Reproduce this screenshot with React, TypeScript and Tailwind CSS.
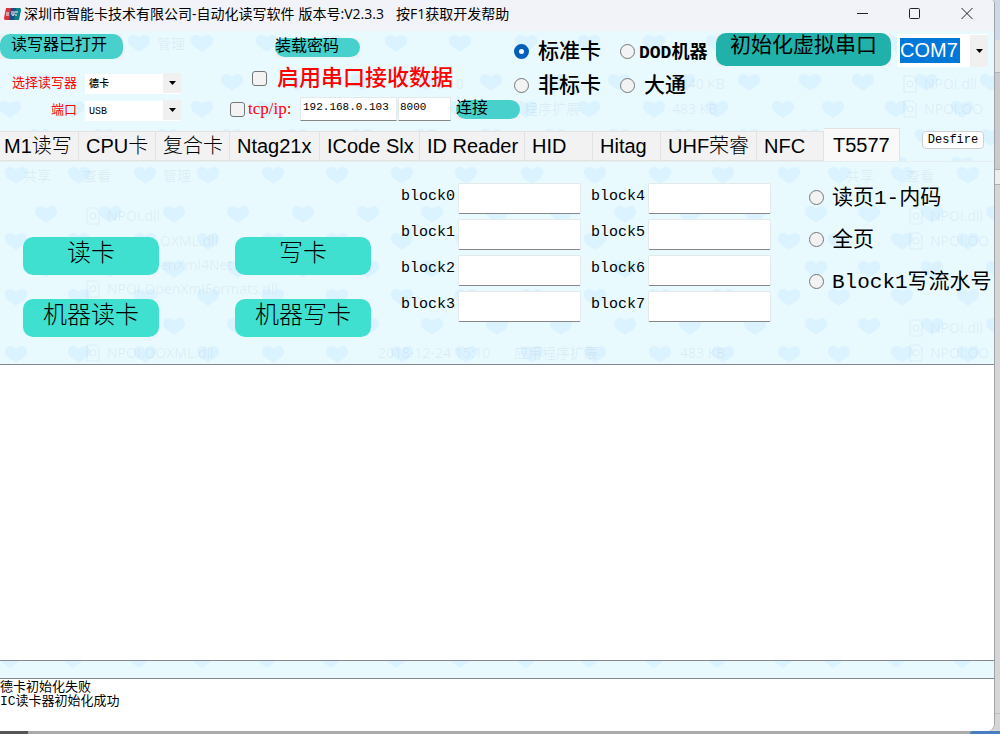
import React, { ReactNode, useState } from 'react';
import clsx from 'clsx';

const tabs = [
  { name: 'M1读写', className: 'w-[79px] pl-1' },
  { name: 'CPU卡', className: 'w-[77px] pl-[7px]' },
  { name: '复合卡', className: 'w-[74px] pl-[7px]' },
  { name: 'Ntag21x', className: 'w-[90px] pl-[7px]' },
  { name: 'ICode Slx', className: 'w-[100px] pl-[7px]' },
  { name: 'ID Reader', className: 'w-[105px] pl-[7px]' },
  { name: 'HID', className: 'w-[68px] pl-[7px]' },
  { name: 'Hitag', className: 'w-[68px] pl-[7px]' },
  { name: 'UHF荣睿', className: 'w-[96px] pl-[7px]' },
  { name: 'NFC', className: 'w-[67px] pl-[7px]' },
  { name: 'T5577', className: 'w-[76px] pl-[9px]' },
];

const evenHearts = [16, 79, 145, 208, 273, 337, 402, 466, 532, 595, 660, 723, 789, 839, 902, 968];
const oddHearts = [46, 110, 174, 238, 303, 368, 432, 497, 561, 625, 690, 755, 816, 869, 932, 997];
const heartRows = [13, 52, 79, 107, 135, 164, 192];

// Faded file list that shows through the wallpaper
const panelGhosts = [
  { x: 23, y: 19, text: '共享' },
  { x: 83, y: 19, text: '查看' },
  { x: 163, y: 19, text: '管理' },
  { x: 846, y: 19, text: '共享' },
  { x: 906, y: 19, text: '查看' },
  { x: 107, y: 59, text: 'NPOI.dll' },
  { x: 160, y: 84, text: 'OXML.dll' },
  { x: 160, y: 108, text: 'enXml4Net' },
  { x: 107, y: 132, text: 'NPOI.OpenXmlFormats.dll' },
  { x: 107, y: 196, text: 'NPOI.OOXML.dll' },
  { x: 378, y: 196, text: '2018-12-24 15:10' },
  { x: 514, y: 196, text: '应用程序扩展' },
  { x: 680, y: 196, text: '483 KB' },
  { x: 930, y: 59, text: 'NPOI.dll' },
  { x: 930, y: 84, text: 'NPOI.OO' },
  { x: 930, y: 171, text: 'NPOI.dll' },
  { x: 930, y: 196, text: 'NPOI.OO' },
];

const headerGhosts = [
  { x: 163, y: 19, text: '管理' },
  { x: 434, y: 59, text: '15:10' },
  { x: 674, y: 59, text: '1,640 KB' },
  { x: 530, y: 84, text: '程序扩展' },
  { x: 678, y: 84, text: '483 KB' },
  { x: 930, y: 59, text: 'NPOI.dll' },
  { x: 930, y: 84, text: 'NPOI.OO' },
];

interface WallpaperProps {
  transform?: string;
  ghosts?: { x: number; y: number; text: string }[];
}

const Wallpaper = ({ transform, ghosts = [] }: WallpaperProps) => (
  <svg className="absolute inset-0 w-full h-full -z-10" aria-hidden="true">
    <g transform={transform}>
      {heartRows.map((y, row) =>
        (row % 2 === 0 ? evenHearts : oddHearts).map((x) => (
          <path
            key={`${x}-${y}`}
            transform={`translate(${x} ${y})`}
            d="M0 9 C-3 6 -12 3 -11 -3 C-11 -8 -4 -10 0 -5 C4 -10 11 -8 11 -3 C12 3 3 6 0 9 Z"
            fill="#dbf3ff"
          />
        ))
      )}
      <g fill="#7d98a0" fillOpacity="0.12" fontSize="14" fontFamily="'Open Sans', 'Noto Sans CJK SC', sans-serif">
        {ghosts.map((ghost) => (
          <text key={`${ghost.x}-${ghost.y}`} x={ghost.x} y={ghost.y}>{ghost.text}</text>
        ))}
        {ghosts
          .filter((ghost) => ghost.text.startsWith('NPOI'))
          .map((ghost) => (
            <g key={`${ghost.x}-${ghost.y}`} fill="none" stroke="#7d98a0" strokeOpacity="0.12">
              <path d={`M${ghost.x - 20} ${ghost.y - 13}h9l3 3v13h-12z`} />
              <circle cx={ghost.x - 14} cy={ghost.y - 5} r="3" />
            </g>
          ))}
      </g>
    </g>
  </svg>
);

// Rounded button sitting on its grey control background
const PillButton = ({ children, className }: { children: ReactNode; className: string }) => (
  <span className="inline-flex bg-[#eef1f2]">
    <button type="button" className={clsx('flex text-black whitespace-nowrap', className)}>
      {children}
    </button>
  </span>
);

const DropArrow = () => (
  <svg width="7" height="4" viewBox="0 0 7 4" aria-hidden="true">
    <path d="M0 0h7L3.500 4z" fill="#000" />
  </svg>
);

const SmallSelect = ({ id, value }: { id: string; value: string }) => (
  <div className="relative w-24 h-5">
    <select
      id={id}
      defaultValue={value}
      className="appearance-none w-full h-full bg-white pl-1 text-[10px] font-medium text-black focus:outline-none"
    >
      <option>{value}</option>
    </select>
    <span className="absolute right-0 top-0 w-[18px] h-full bg-[#f0f0f0] flex items-center justify-center pointer-events-none">
      <DropArrow />
    </span>
  </div>
);

interface RadioProps {
  name: string;
  label: string;
  className?: string;
  textClassName?: string;
  defaultChecked?: boolean;
}

const Radio = ({ name, label, className, textClassName = 'text-[21px]', defaultChecked }: RadioProps) => (
  <label className={clsx('flex items-center whitespace-nowrap h-6', className)}>
    <input
      type="radio"
      name={name}
      defaultChecked={defaultChecked}
      className="appearance-none shrink-0 w-[15px] h-[15px] rounded-full border border-[#767676] bg-[#f3f3f3] checked:border-[5px] checked:border-[#005fb8] checked:bg-white"
    />
    <span className={clsx('pt-[3px] leading-6', textClassName)}>{label}</span>
  </label>
);

const Checkbox = ({ id }: { id: string }) => (
  <input
    type="checkbox"
    id={id}
    className="appearance-none shrink-0 w-[15px] h-[15px] rounded-[3px] border border-[#767676] bg-[#f3f3f3] checked:bg-[#005fb8]"
  />
);

const BlockFields = ({ from }: { from: number }) => (
  <div className="flex flex-col gap-[5px]">
    {[0, 1, 2, 3].map((i) => {
      const name = `block${from + i}`;
      return (
        <div key={name} className="flex">
          <label htmlFor={name} className="w-[57px] pt-1 text-[15px] leading-5">{name}</label>
          <input
            id={name}
            type="text"
            className="w-[123px] h-[31px] px-1 bg-white border border-[#e3eaec] border-b-[#868686] rounded-[2px] text-[15px] focus:outline-none"
          />
        </div>
      );
    })}
  </div>
);

const TitleBar = () => (
  <div className="h-[31px] shrink-0 flex items-center bg-[#f1f3f9] pl-1 pr-5 pb-1 text-black">
    <svg width="17" height="12" viewBox="0 0 17 12" aria-hidden="true">
      <path d="M2 0h6L6 12H1Q0 12 0 10z" fill="#d8343f" />
      <path d="M7 0h6l-2 12H5z" fill="#1d4f80" />
      <path d="M12 0h4q1 0 1 2l-2 10h-5z" fill="#0c7f8a" />
      <path d="M2 5h3M2 7h3M8 3v4q0 1 2 0V3M11 4h3M11 7h2" stroke="#fff" fill="none" />
    </svg>
    <h1 className="flex pl-[3px] font-['Open_Sans','Noto_Sans_CJK_SC',sans-serif] text-[14px] leading-5 whitespace-nowrap">
      <span>深圳市智能卡技术有限公司-自动化读写软件</span>
      <span className="pl-1">版本号:V2.3.3</span>
      <span className="pl-3">按F1获取开发帮助</span>
    </h1>
    <div className="ml-auto flex gap-9">
      <button type="button" aria-label="Minimize" className="w-4 h-4">
        <svg width="16" height="16" viewBox="0 0 16 16" stroke="#222"><path d="M3 7.500h11" /></svg>
      </button>
      <button type="button" aria-label="Maximize" className="w-4 h-4">
        <svg width="16" height="16" viewBox="0 0 16 16" stroke="#222" fill="none"><rect x="3.500" y="2.500" width="10" height="10" rx="1" /></svg>
      </button>
      <button type="button" aria-label="Close" className="w-4 h-4">
        <svg width="16" height="16" viewBox="0 0 16 16" stroke="#222"><path d="M3.500 2l11 11M14.500 2l-11 11" /></svg>
      </button>
    </div>
  </div>
);

const ConnectionBar = () => (
  <div className="flex h-[97px]">
    <div className="w-[230px] shrink-0 pt-[3px]">
      <PillButton className="w-[123px] h-[25px] rounded-[10px] bg-[#48d1cc] pl-[11px] text-[16px] leading-6">
        读写器已打开
      </PillButton>
      <div className="grid grid-cols-[77px_96px] gap-x-2 gap-y-[7px] pt-[14px] text-[13px] leading-[22px] text-[#ff0000] text-right">
        <label htmlFor="reader" className="whitespace-nowrap h-5">选择读写器</label>
        <SmallSelect id="reader" value="德卡" />
        <label htmlFor="port" className="h-5">端口</label>
        <SmallSelect id="port" value="USB" />
      </div>
    </div>

    <div className="w-[284px] shrink-0 pt-[7px]">
      <div className="pl-[45px] h-5 flex">
        <PillButton className="w-[85px] h-[19px] rounded-[10px] bg-[#48d1cc] text-[16px] leading-[18px]">装载密码</PillButton>
      </div>
      <div className="flex items-center pl-[22px] pt-1 h-9">
        <Checkbox id="serial" />
        <label htmlFor="serial" className="pl-[10px] pt-[3px] text-[22px] font-medium leading-7 text-[#ff0000]">启用串口接收数据</label>
      </div>
      <div className="flex items-center pt-[3px]">
        <Checkbox id="tcp" />
        <label htmlFor="tcp" className="w-[55px] shrink-0 pl-[3px] font-['Liberation_Serif',serif] text-[17px] leading-5 text-[#ff0000]">tcp/ip:</label>
        <input
          type="text"
          aria-label="IP"
          defaultValue="192.168.0.103"
          className="w-[97px] h-6 shrink-0 pl-[2px] pb-1 bg-white border border-[#e3eaec] border-b-[#868686] text-[11px]"
        />
        <input
          type="text"
          aria-label="Port"
          defaultValue="8000"
          className="w-[53px] h-6 shrink-0 ml-[1px] pl-[1px] pb-1 bg-white border border-[#e3eaec] border-b-[#868686] text-[11px]"
        />
        <div className="pl-[5px] flex shrink-0">
          <PillButton className="w-16 h-[19px] rounded-[10px] bg-[#48d1cc] text-[16px] leading-[18px]">连接</PillButton>
        </div>
      </div>
    </div>

    <div className="grid grid-cols-[106px_96px] content-start gap-y-[10px] pt-2 shrink-0">
      <Radio name="card" label="标准卡" className="gap-[9px]" textClassName="text-[21px] font-medium" defaultChecked />
      <Radio name="card" label="DOD机器" className="gap-1" textClassName="text-[18px] font-bold" />
      <Radio name="card" label="非标卡" className="gap-[9px]" textClassName="text-[21px] font-medium" />
      <Radio name="card" label="大通" className="gap-[9px]" textClassName="text-[21px] font-medium" />
    </div>

    <div className="pt-[2px] shrink-0">
      <PillButton className="w-[175px] h-[33px] rounded-[10px] bg-[#20b2aa] pl-[14px] text-[21px] leading-7">
        初始化虚拟串口
      </PillButton>
    </div>

    <div className="ml-auto mr-[6px] mt-[3px] flex items-center w-[91px] h-[33px] shrink-0 bg-white pl-[3px]">
      <input
        type="text"
        aria-label="COM"
        defaultValue="COM7"
        className="w-[60px] h-[25px] bg-[#0078d7] text-white font-['Liberation_Sans',sans-serif] text-[20px] leading-6"
      />
      <button type="button" aria-label="COM list" className="ml-auto w-[18px] h-8 bg-[#f0f0f0] flex items-center justify-center">
        <DropArrow />
      </button>
    </div>
  </div>
);

const App = () => {
  const [activeTab, setActiveTab] = useState('T5577');

  return (
    <div className="min-h-screen flex flex-col bg-[#d6d6d6] font-['Liberation_Mono','Noto_Sans_CJK_SC',monospace] text-black">
      <div className="flex-1 flex">
        <main className="flex-1 min-w-0 flex flex-col bg-[#e9faff] border-r border-[#a0a4a6] rounded-br-lg rounded-tr-sm overflow-hidden">
          <TitleBar />

          <header className="relative isolate overflow-hidden">
            <Wallpaper transform="translate(-6 -1)" ghosts={headerGhosts} />
            <ConnectionBar />
            <div className="flex items-end">
              <div role="tablist" className="flex items-end font-['Liberation_Sans','Noto_Sans_CJK_SC',sans-serif] text-[20px]">
                {tabs.map((tab) => (
                  <button
                    key={tab.name}
                    type="button"
                    role="tab"
                    aria-selected={activeTab === tab.name}
                    onClick={() => setActiveTab(tab.name)}
                    className={clsx(
                      'shrink-0 text-left whitespace-nowrap border-[#e2e2e2] font-light',
                      tab.className,
                      activeTab === tab.name
                        ? 'h-[33px] bg-[#f9f9f9] border-t border-r leading-[29px]'
                        : 'h-[30px] bg-[#f2f2f2] border-y border-r leading-[29px]'
                    )}
                  >
                    {tab.name}
                  </button>
                ))}
              </div>
              <button
                type="button"
                className="ml-auto mr-[10px] mb-3 w-[62px] h-[18px] shrink-0 bg-white border border-[#d0d0d0] rounded-[4px] text-[12px] leading-4"
              >
                Desfire
              </button>
            </div>
          </header>

          <section className="relative isolate overflow-hidden flex h-[203px] shrink-0 pl-[23px] pt-[21px] border-t border-[#e6eef0]">
            <Wallpaper ghosts={panelGhosts} />
            <div className="grid grid-cols-[136px_136px] gap-x-[76px] gap-y-6 content-start pt-[54px] text-[24px]">
              {['读卡', '写卡', '机器读卡', '机器写卡'].map((name) => (
                <button key={name} type="button" className="h-[38px] rounded-[10px] bg-[#40e0d0] pb-[2px] leading-8 font-light">
                  {name}
                </button>
              ))}
            </div>
            <div className="flex gap-[10px] pl-[30px]">
              <BlockFields from={0} />
              <BlockFields from={4} />
            </div>
            <div className="flex flex-col gap-[18px] pl-[38px] pt-[2px]">
              <Radio name="page" label="读页1-内码" className="gap-2" />
              <Radio name="page" label="全页" className="gap-2" />
              <Radio name="page" label="Block1写流水号" className="gap-2" />
            </div>
          </section>

          <textarea
            aria-label="数据"
            className="flex-1 w-full resize-none bg-white border-y border-[#828790] p-1 text-[13px] focus:outline-none"
          />

          <div className="relative isolate overflow-hidden h-[17px] shrink-0">
            <Wallpaper transform="translate(-6 -194)" />
          </div>

          <textarea
            aria-label="日志"
            readOnly
            defaultValue={'德卡初始化失败\nIC读卡器初始化成功'}
            className="h-[53px] shrink-0 w-full resize-none overflow-hidden bg-white border-t border-[#828790] pt-[2px] text-[13px] leading-[14px] focus:outline-none"
          />
        </main>

        {/* edge of the window underneath */}
        <div className="w-[5px] shrink-0 flex flex-col overflow-hidden">
          <div className="h-10 bg-[#cfd8e8]" />
          <div className="h-[33px] bg-[#e0e0e0] border-b border-[#b5b5b5]" />
          <div className="h-[97px] bg-[#cccccc] border-b border-[#b0b0b0]" />
          <div className="h-[15px] bg-[#eeeeee] border-b border-[#b0b0b0]" />
          <div className="flex-1 bg-[#d6d6d6]" />
          <div className="h-[18px] border-t border-[#bcbcbc]" />
        </div>
      </div>
      <div className="h-[3px] flex bg-[#ababab]">
        <div className="w-7 bg-[#555555]" />
        <div className="ml-auto w-[30px] rounded-tl-sm bg-[#4a7dbd]" />
      </div>
    </div>
  );
};

export default App;
